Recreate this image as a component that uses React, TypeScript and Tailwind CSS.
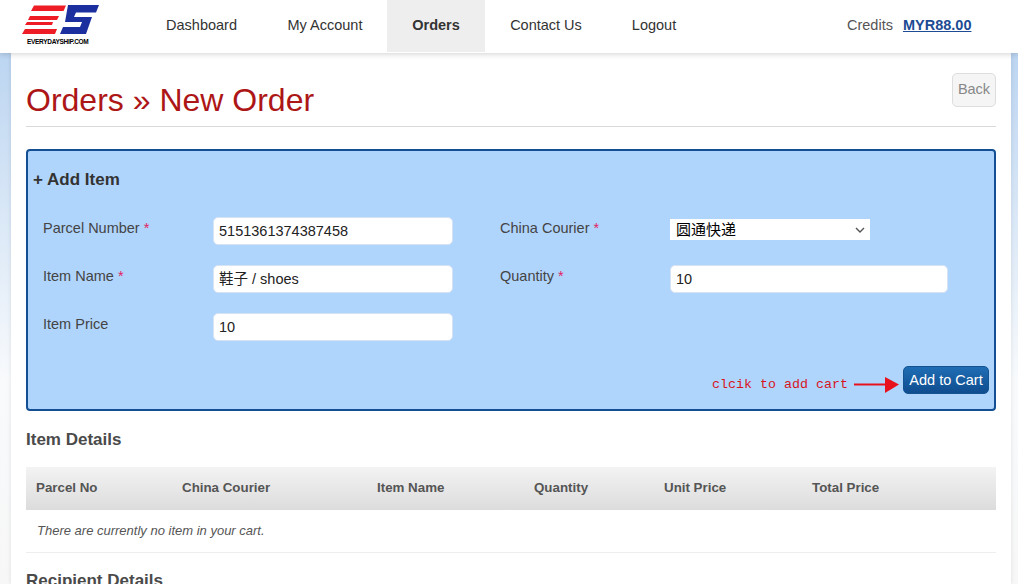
import React from 'react';

const font = "font-['Liberation_Sans','Noto_Sans_CJK_SC',sans-serif]";

const navItems = [
  { label: 'Dashboard', width: 'w-[123px]' },
  { label: 'My Account', width: 'w-[124px]' },
  { label: 'Orders', width: 'w-[98px]', active: true },
  { label: 'Contact Us', width: 'w-[122px]' },
  { label: 'Logout', width: 'w-[94px]' },
];

const columns = [
  { label: 'Parcel No', width: 'w-[146px]' },
  { label: 'China Courier', width: 'w-[195px]' },
  { label: 'Item Name', width: 'w-[157px]' },
  { label: 'Quantity', width: 'w-[130px]' },
  { label: 'Unit Price', width: 'w-[148px]' },
  { label: 'Total Price', width: 'w-[150px]' },
];

const Logo: React.FC = () => (
  <div className="flex w-[90px] flex-col items-start">
    <svg width="78" height="30" viewBox="0 0 78 30">
      <polygon points="12,0.500 44,0.500 41.500,6 9,6" fill="#ee1c25" />
      <polygon points="8,11 37,11 35,15 6,15" fill="#ee1c25" />
      <polygon points="5,17 31,17 30,20 3,20" fill="#ee1c25" />
      <polygon points="3,24 35,24 33,29 0,29" fill="#ee1c25" />
      <polygon points="46,0 77,0 74,7.500 54,7.500 52,12 70,12 64,29 38,29 41,22 58,22 60,17 43,17" fill="#1c2f9e" />
    </svg>
    <span className="mt-[3px] ml-[5px] text-[6.500px] leading-[8px] font-bold tracking-[-0.3px] whitespace-nowrap text-black">
      EVERYDAYSHIP.COM
    </span>
  </div>
);

const Header: React.FC = () => (
  <header className="relative z-10 flex h-[53px] items-start bg-white pl-[22px] shadow-[0_1px_6px_rgba(0,0,0,0.18)]">
    <div className="pt-[5px]">
      <Logo />
    </div>
    <nav className="ml-[28px] flex h-[52px]">
      {navItems.map((item) => (
        <a
          key={item.label}
          className={`flex items-center justify-center text-[14.500px] ${item.width} ${
            item.active ? 'bg-[#eeeeee] font-bold text-[#333333]' : 'text-[#333333]'
          }`}
        >
          {item.label}
        </a>
      ))}
    </nav>
    <div className="ml-[146px] flex h-[52px] items-center text-[14.500px] whitespace-nowrap">
      <span className="text-[#555555]">Credits</span>
      <a className="ml-[10px] font-bold text-[#1d4b94] underline">MYR88.00</a>
    </div>
  </header>
);

const Label: React.FC<{ text: string; required?: boolean }> = ({ text, required }) => (
  <div className="pt-[1px] text-[14.500px] leading-[20px] text-[#444444]">
    {text}
    {required && <span className="text-[#e0245e]"> *</span>}
  </div>
);

const TextBox: React.FC<{ value: string; width: string }> = ({ value, width }) => (
  <div
    className={`flex h-[28px] items-center rounded-[5px] border border-[#d5e3f3] bg-white px-[5px] pt-[2px] text-[14.500px] text-[#222222] ${width}`}
  >
    {value}
  </div>
);

const ItemForm: React.FC = () => (
  <section className="mt-[22px] h-[262px] rounded-[4px] border-2 border-[#134f92] bg-[#b0d5fd]">
    <h3 className="pt-[19px] pl-[5px] text-[17px] leading-[20px] font-bold text-[#333333]">+ Add Item</h3>
    <div className="mt-[27px] flex">
      <div className="ml-[15px] flex w-[457px] flex-col gap-[20px]">
        <div className="flex">
          <div className="w-[170px]">
            <Label text="Parcel Number" required />
          </div>
          <TextBox value="5151361374387458" width="w-[240px]" />
        </div>
        <div className="flex">
          <div className="w-[170px]">
            <Label text="Item Name" required />
          </div>
          <TextBox value="鞋子 / shoes" width="w-[240px]" />
        </div>
        <div className="flex">
          <div className="w-[170px]">
            <Label text="Item Price" />
          </div>
          <TextBox value="10" width="w-[240px]" />
        </div>
      </div>
      <div className="flex flex-col gap-[20px]">
        <div className="flex h-[28px]">
          <div className="w-[170px]">
            <Label text="China Courier" required />
          </div>
          <div className="mt-[2px] flex h-[21px] w-[200px] items-center justify-between bg-white pt-[1px] pr-[5px] pl-[6px] text-[15px] text-black">
            圆通快递
            <svg width="10" height="6" viewBox="0 0 10 6" fill="none" stroke="#555555" strokeWidth="1.400">
              <path d="M1 1l4 4 4-4" />
            </svg>
          </div>
        </div>
        <div className="flex">
          <div className="w-[170px]">
            <Label text="Quantity" required />
          </div>
          <TextBox value="10" width="w-[278px]" />
        </div>
      </div>
    </div>
    <div className="mt-[25px] flex items-center justify-end pr-[5px]">
      <span className="mt-[10px] font-['Liberation_Mono',monospace] text-[13.333px] leading-[16px] text-[#d8141c]">
        clcik to add cart
      </span>
      <svg className="mt-[10px] ml-[6px]" width="46" height="16" viewBox="0 0 46 16">
        <path d="M0 7.500H32" stroke="#e8121c" strokeWidth="2" />
        <polygon points="31,0 45,7.500 31,16" fill="#e8121c" />
      </svg>
      <button className="ml-[3px] h-[28px] w-[86px] rounded-[5px] border border-[#145391] bg-gradient-to-b from-[#1f6db4] to-[#0f4d8f] pt-[1px] text-[14.500px] text-white">
        Add to Cart
      </button>
    </div>
  </section>
);

const ItemTable: React.FC = () => (
  <section>
    <h4 className="mt-[19px] text-[17px] leading-[20px] font-bold text-[#4a4a4a]">Item Details</h4>
    <div className="mt-[17px] flex h-[43px] items-center bg-gradient-to-b from-[#f3f3f3] to-[#dcdcdc] pb-[2px] pl-[10px] text-[13.333px] font-bold text-[#555555]">
      {columns.map((col) => (
        <div key={col.label} className={col.width}>
          {col.label}
        </div>
      ))}
    </div>
    <div className="flex h-[43px] items-center border-b border-[#eeeeee] pl-[11px] text-[13px] text-[#555555] italic">
      There are currently no item in your cart.
    </div>
    <h4 className="mt-[18px] text-[17px] leading-[20px] font-bold text-[#4a4a4a]">Recipient Details</h4>
  </section>
);

export default function App() {
  return (
    <div className={`h-[584px] overflow-hidden bg-gradient-to-b from-[#b2cfef] via-[#f8fafc] via-65% to-[#f7f7f7] ${font}`}>
      <Header />
      <main className="mr-[7px] ml-[11px] h-[531px] bg-white px-[15px] shadow-[0_0_4px_rgba(0,0,0,0.1)]">
        <div className="flex h-[74px] items-start justify-between border-b border-[#d9d9d9]">
          <h1 className="mt-[27px] text-[32px] leading-[40px] text-[#ad1616]">Orders » New Order</h1>
          <button className="mt-[20px] h-[34px] w-[44px] rounded-[5px] border border-[#dddddd] bg-[#f5f5f5] text-[14.500px] text-[#888888]">
            Back
          </button>
        </div>
        <ItemForm />
        <ItemTable />
      </main>
    </div>
  );
}
